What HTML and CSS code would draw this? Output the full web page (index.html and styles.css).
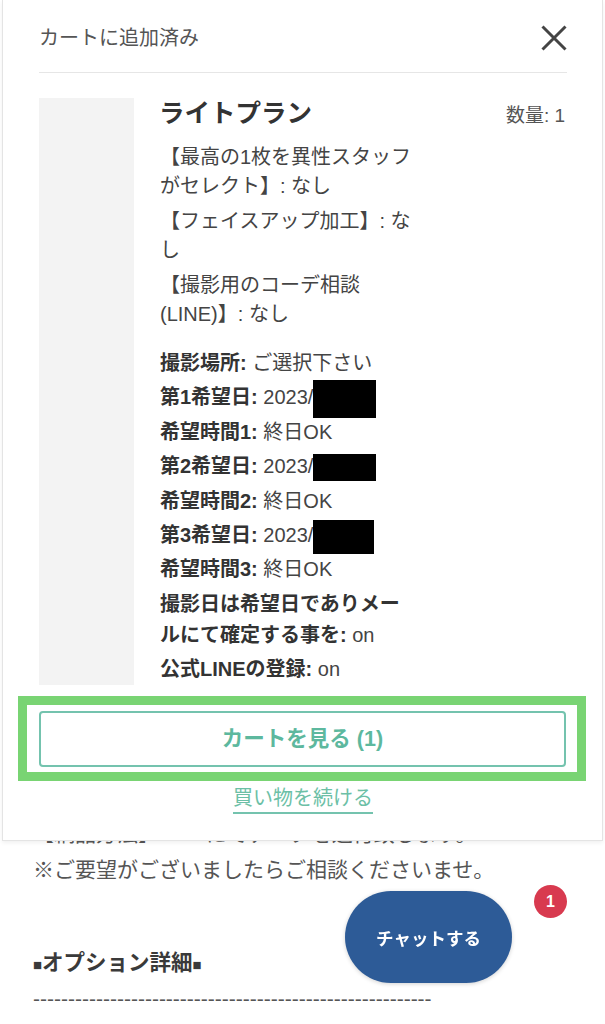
FILE: index.html
```html
<!DOCTYPE html>
<html lang="ja">
<head>
  <meta charset="utf-8">
  <title>カートに追加済み</title>
  <meta name="viewport" content="width=device-width, initial-scale=1.0">
  <link rel="stylesheet" href="styles.css">
</head>
<body>
  <!-- page behind the cart drawer -->
  <div class="page">
    <p class="desc">【納品方法】LINEにてデータを送付致します。</p>
    <p class="desc">※ご要望がございましたらご相談くださいませ。</p>
    <h2 class="opt-title"><span class="sq">■</span>オプション詳細<span class="sq">■</span></h2>
    <p class="dashes">---------------------------------------------------------</p>
  </div>

  <div class="cart-drawer">
    <div class="drawer-head">
      <span class="drawer-title">カートに追加済み</span>
      <button class="close" aria-label="閉じる">
        <svg width="26" height="26" viewBox="0 0 26 26">
          <path d="M1.5 1.5 L24.5 24.5 M24.5 1.5 L1.5 24.5" stroke="#444" stroke-width="3" fill="none"/>
        </svg>
      </button>
    </div>

    <div class="item">
      <div class="thumb"></div>
      <div class="info">
        <div class="title-row">
          <h3 class="item-name">ライトプラン</h3>
          <span class="qty">数量: 1</span>
        </div>
        <div class="props">
          <p>【最高の1枚を異性スタッフがセレクト】: なし</p>
          <p>【フェイスアップ加工】: なし</p>
          <p>【撮影用のコーデ相談(LINE)】: なし</p>
        </div>
        <ul class="details">
          <li><b>撮影場所:</b> ご選択下さい</li>
          <li><b>第1希望日:</b> 2023/<span class="redact r1"></span></li>
          <li><b>希望時間1:</b> 終日OK</li>
          <li><b>第2希望日:</b> 2023/<span class="redact r2"></span></li>
          <li><b>希望時間2:</b> 終日OK</li>
          <li><b>第3希望日:</b> 2023/<span class="redact r3"></span></li>
          <li><b>希望時間3:</b> 終日OK</li>
          <li><b>撮影日は希望日でありメー</b><br><b>ルにて確定する事を:</b> on</li>
          <li><b>公式LINEの登録:</b> on</li>
        </ul>
      </div>
    </div>

    <div class="highlight">
      <a class="view-cart" href="#">カートを見る (1)</a>
    </div>
    <div class="continue">
      <a href="#">買い物を続ける</a>
    </div>
  </div>

  <a class="chat" href="#">チャットする</a>
  <span class="badge">1</span>
</body>
</html>
```

FILE: styles.css
```css
* {
  box-sizing: border-box;
}
body {
  margin: 0;
  padding: 0;
  background: #fff;
  font-family: "Liberation Sans", "Noto Sans CJK JP", sans-serif;
  color: #444;
}
a {
  text-decoration: none;
}

/* page behind */
.page {
  padding: 816px 33px 0;
}
.desc {
  margin: 0;
  font-size: 21px;
  line-height: 36px;
  color: #555;
}
.opt-title {
  margin: 60px 0 0;
  font-size: 21.5px;
  line-height: 30px;
  color: #3a3a3a;
  font-weight: bold;
}
.sq {
  font-size: 15px;
}
.dashes {
  margin: 4px 0 0;
  font-size: 21px;
  line-height: 30px;
  color: #555;
  white-space: nowrap;
  overflow: hidden;
}

/* cart drawer */
.cart-drawer {
  position: absolute;
  top: 0;
  left: 2px;
  right: 2px;
  background: #fff;
  border: 1px solid #e4e4e4;
  border-top: none;
  box-shadow: 0 2px 4px rgba(0, 0, 0, 0.06);
  padding: 0 35px 26px 36px;
}
.drawer-head {
  height: 73px;
  padding-top: 1px;
  display: flex;
  align-items: center;
  justify-content: space-between;
  border-bottom: 1px solid #e6e6e6;
}
.drawer-title {
  font-size: 20px;
  color: #555;
}
.close {
  border: none;
  background: none;
  padding: 0;
  width: 26px;
  height: 26px;
  display: block;
  margin-top: 2px;
}
.close svg {
  display: block;
}

.item {
  display: flex;
  gap: 26px;
  margin-top: 25px;
}
.thumb {
  width: 95px;
  flex-shrink: 0;
  background: #f3f3f3;
}
.info {
  flex: 1;
}
.title-row {
  display: flex;
  justify-content: space-between;
  align-items: center;
}
.item-name {
  margin: 0;
  font-size: 25.5px;
  line-height: 30px;
  font-weight: bold;
  color: #333;
  margin-left: -1px;
}
.qty {
  font-size: 19px;
  color: #555;
  margin-right: 2px;
}
.props {
  width: 255px;
  margin-top: 15px;
}
.props p {
  margin: 0 0 7px;
  font-size: 20px;
  line-height: 28.5px;
  color: #444;
}
.props p:last-child {
  margin-bottom: 0;
}
.details {
  list-style: none;
  margin: 20px 0 0;
  padding: 0;
  width: 255px;
}
.details li {
  font-size: 20px;
  line-height: 31px;
  margin-bottom: 3.4px;
  color: #444;
}
.details li:last-child {
  margin-bottom: 0;
}
.details b {
  color: #333;
}
.redact {
  display: inline-block;
  background: #000;
  vertical-align: middle;
  margin: -6px 0;
}
.r1 {
  width: 63px;
  height: 38px;
}
.r2 {
  width: 63px;
  height: 27px;
}
.r3 {
  width: 61px;
  height: 34px;
}

.highlight {
  margin: 11px -19px 0 -21px;
  border: 9px solid #79d473;
  padding: 6px 11px 5px 12px;
}
.view-cart {
  display: block;
  height: 56px;
  line-height: 52px;
  border: 2px solid #74c3ae;
  border-radius: 4px;
  text-align: center;
  font-size: 21.5px;
  font-weight: bold;
  color: #5db89e;
}
.continue {
  display: flex;
  justify-content: center;
  margin-top: 5px;
}
.continue a {
  display: inline-block;
  font-size: 20px;
  line-height: 24px;
  padding-bottom: 2px;
  border-bottom: 2px solid #74c3ae;
  color: #6cbfa6;
}

/* chat widget */
.chat {
  position: fixed;
  right: 93px;
  bottom: 41px;
  width: 167px;
  height: 92px;
  border-radius: 46px;
  background: #2d5b97;
  color: #fff;
  font-size: 17.5px;
  font-weight: bold;
  display: flex;
  align-items: center;
  justify-content: center;
  box-shadow: 0 1px 4px rgba(0, 0, 0, 0.18);
}
.badge {
  position: fixed;
  right: 38px;
  bottom: 106px;
  width: 33px;
  height: 33px;
  border-radius: 50%;
  background: #d83a4f;
  color: #fff;
  font-size: 16px;
  font-weight: bold;
  display: flex;
  align-items: center;
  justify-content: center;
}
```
